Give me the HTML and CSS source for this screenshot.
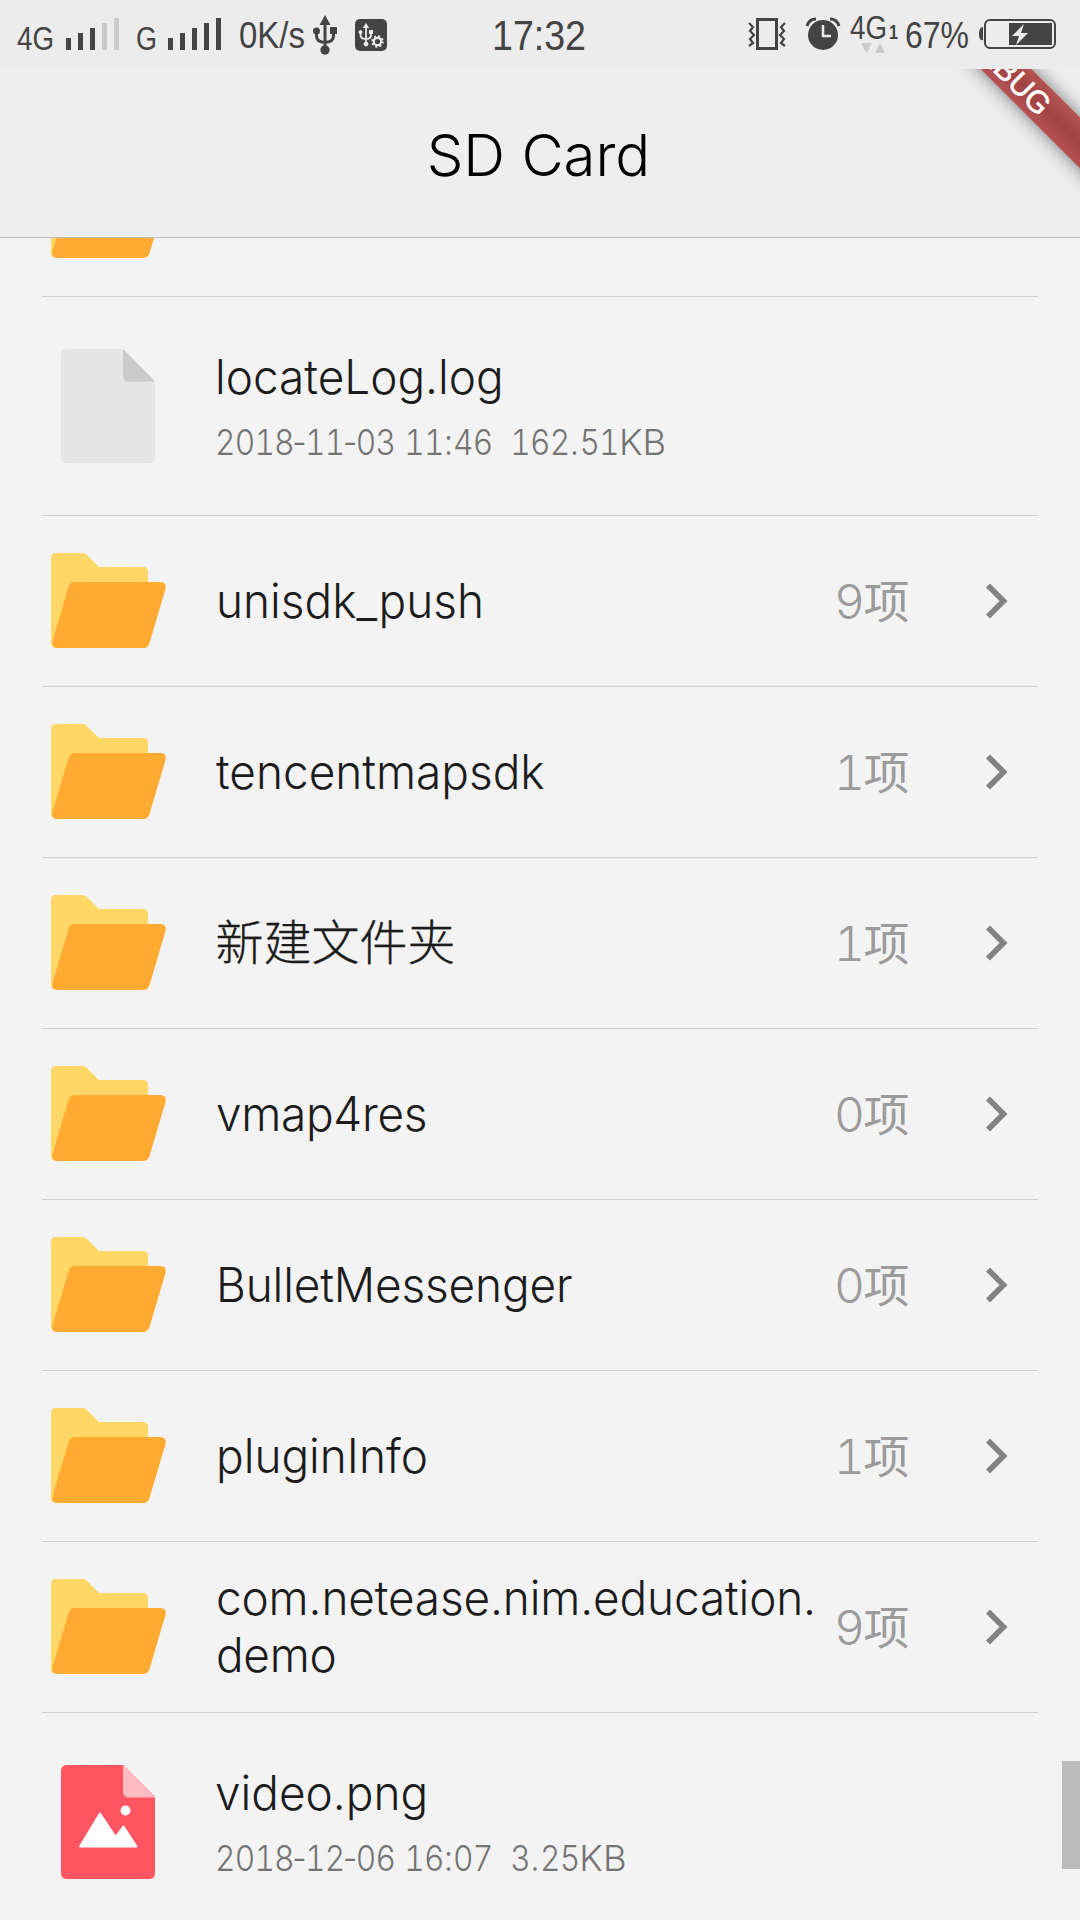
FILE: index.html
```html
<!DOCTYPE html>
<html lang="zh-CN">
<head>
<meta charset="utf-8">
<title>SD Card</title>
<link rel="stylesheet" href="styles.css">
</head>
<body>
<svg width="0" height="0" class="defs" aria-hidden="true">
  <symbol id="folder" viewBox="0 0 116 97">
    <path fill="#ffd766" d="M5 1H31Q34 1 36 3L48 15H92Q97 15 97 20V90Q97 96 91 96H6Q0 96 0 90V6Q0 1 5 1Z"/>
    <path fill="#ffab31" d="M24 30H109Q116 30 114.500 37L98.500 91Q97 96 92 96H7Q0 96 1.500 89L17.500 35Q19 30 24 30Z"/>
  </symbol>
  <symbol id="chevron" viewBox="0 0 24 38"><path d="M3 3.500L18.500 19L3 34.500" fill="none" stroke="#838383" stroke-width="5.700"/></symbol>
</svg>
<header class="status">
  <div class="status-left">
    <svg class="net" width="37" height="32"><text x="0" y="26" font-size="33" textLength="37" lengthAdjust="spacingAndGlyphs">4G</text></svg>
    <svg class="bars" width="54" height="32"><path d="M0 14h5v12h-5zM12 9h5v17h-5zM24 4h5v22h-5z"/><path class="dim" d="M36-1h5v27h-5zM48-6h5v32h-5z"/></svg>
    <svg class="net2" width="21" height="32"><text x="0" y="26" font-size="33" textLength="21" lengthAdjust="spacingAndGlyphs">G</text></svg>
    <svg class="bars" width="54" height="32"><path d="M0 14h5v12h-5zM12 9h5v17h-5zM24 4h5v22h-5zM36-1h5v27h-5zM48-6h5v32h-5z"/></svg>
    <svg class="speed" width="66" height="32"><text x="0" y="24" font-size="36" textLength="66" lengthAdjust="spacingAndGlyphs">0K/s</text></svg>
    <svg class="usb" width="24" height="40"><path d="M12 0L17.500 10H6.500ZM17 12h7v7h-7z"/><circle cx="3.500" cy="16" r="3.500"/><circle cx="12" cy="35" r="4.700"/><path d="M12 8V34M3.500 16V21Q3.500 27 12 27.500M20.500 16V21Q20.500 27 12 27.500" fill="none" stroke="#444" stroke-width="3"/></svg>
    <svg class="usbset" width="32" height="32"><rect width="32" height="32" rx="5"/><g fill="#ececec" stroke="#ececec"><path stroke="none" d="M11 4l3.200 5H7.800zM14 11h4v4h-4z"/><circle cx="5.500" cy="13" r="1.500"/><circle cx="11" cy="25" r="2"/><path d="M11 8V25M5.500 13V16Q5.500 20 11 20M16 14V16Q16 20 11 20" fill="none" stroke-width="1.800"/><circle cx="22.500" cy="22.500" r="3.700" fill="none" stroke-width="2.200"/><circle cx="22.500" cy="22.500" r="5.200" fill="none" stroke-width="2" stroke-dasharray="2 2.080"/></g></svg>
  </div>
  <svg class="time" width="94" height="40"><text x="0" y="34" font-size="42" textLength="94" lengthAdjust="spacingAndGlyphs">17:32</text></svg>
  <div class="status-right">
    <svg class="vibrate" width="38" height="32"><path d="M9.500 1.500h19v29h-19z" fill="none" stroke="#444" stroke-width="3"/><path d="M1 5l4 4-3 4 4 4-4 4 3 4-4 3M37 5l-4 4 3 4-4 4 4 4-3 4 4 3" fill="none" stroke="#444" stroke-width="2.200"/></svg>
    <svg class="alarm" width="34" height="32"><circle cx="17" cy="17" r="15"/><path d="M17 7v11h8" fill="none" stroke="#ececec" stroke-width="2.500"/><path d="M1 8Q3 1 10 1M24 1Q31 1 33 8" fill="none" stroke="#444" stroke-width="3"/></svg>
    <svg class="data" width="48" height="40"><text x="0" y="26" font-size="33" textLength="37" lengthAdjust="spacingAndGlyphs">4G</text><text x="39" y="26" font-size="20" textLength="9" lengthAdjust="spacingAndGlyphs" class="sim">1</text><path class="dim" d="M11 30h11l-5.500 10zM25 40h10l-5-10z"/></svg>
    <svg class="pct" width="64" height="32"><text x="0" y="26" font-size="36" textLength="64" lengthAdjust="spacingAndGlyphs">67%</text></svg>
    <svg class="battery" width="77" height="32"><path d="M4 9Q0 9 0 16T4 22z"/><rect x="6" y="2" width="70" height="28" rx="5" fill="none" stroke="#444" stroke-width="2"/><path d="M30 5h43v22H30z"/><path fill="#ececec" d="M45 6L33 18h7l-3 9 12-12h-7z"/></svg>
  </div>
</header>
<nav class="nav">
  <h1>SD Card</h1>
  <div class="debug-area"><div class="debug">DEBUG</div></div>
</nav>
<main class="list">
  <div class="row folder cut"><svg class="ico"><use href="#folder"/></svg></div>
  <div class="row file">
    <svg class="ico doc" viewBox="0 0 94 114"><path fill="#e5e5e5" d="M6 0H62L94 32V108Q94 114 88 114H6Q0 114 0 108V6Q0 0 6 0Z"/><path fill="#cacaca" d="M62 0L94 32.500H68Q62 32.500 62 27Z"/></svg>
    <div class="info"><div class="name">locateLog.log</div><div class="meta"><span class="date">2018<i>-</i>11<i>-</i>03</span><span class="hour">11<i class="colon">:</i>46</span><span>162<i class="dot">.</i>51<b>KB</b></span></div></div>
  </div>
  <div class="row folder"><svg class="ico"><use href="#folder"/></svg><div class="name">unisdk_push</div><div class="count">9<span>项</span></div><svg class="chev"><use href="#chevron"/></svg></div>
  <div class="row folder"><svg class="ico"><use href="#folder"/></svg><div class="name">tencentmapsdk</div><div class="count">1<span>项</span></div><svg class="chev"><use href="#chevron"/></svg></div>
  <div class="row folder"><svg class="ico"><use href="#folder"/></svg><div class="name han">新建文件夹</div><div class="count">1<span>项</span></div><svg class="chev"><use href="#chevron"/></svg></div>
  <div class="row folder"><svg class="ico"><use href="#folder"/></svg><div class="name tight">vmap4res</div><div class="count">0<span>项</span></div><svg class="chev"><use href="#chevron"/></svg></div>
  <div class="row folder"><svg class="ico"><use href="#folder"/></svg><div class="name snug">BulletMessenger</div><div class="count">0<span>项</span></div><svg class="chev"><use href="#chevron"/></svg></div>
  <div class="row folder"><svg class="ico"><use href="#folder"/></svg><div class="name">pluginInfo</div><div class="count">1<span>项</span></div><svg class="chev"><use href="#chevron"/></svg></div>
  <div class="row folder"><svg class="ico"><use href="#folder"/></svg><div class="name snug">com.netease.nim.education.<br><span class="tight">demo</span></div><div class="count">9<span>项</span></div><svg class="chev"><use href="#chevron"/></svg></div>
  <div class="row file">
    <svg class="ico doc" viewBox="0 0 94 114"><path fill="#ff5562" d="M6 0H62L94 32V108Q94 114 88 114H6Q0 114 0 108V6Q0 0 6 0Z"/><path fill="#ffbbc0" d="M62 0L94 32.500H68Q62 32.500 62 27Z"/><path fill="#fff" stroke="#fff" stroke-width="2" stroke-linejoin="round" d="M19 81.500L39 48.500L54.500 72L62.500 61.500L75.500 81.500Z"/><circle cx="64.500" cy="45.500" r="5" fill="#fff"/></svg>
    <div class="info"><div class="name">video.png</div><div class="meta"><span class="date">2018<i>-</i>12<i>-</i>06</span><span class="hour">16<i class="colon">:</i>07</span><span>3<i class="dot">.</i>25<b>KB</b></span></div></div>
  </div>
  <div class="scrollbar"></div>
</main>
</body>
</html>
```
FILE: styles.css
```css
* { box-sizing: border-box; }
body {
  margin: 0;
  width: 1080px;
  height: 1920px;
  overflow: hidden;
  background: #f3f3f3;
  color: #1c1c1c;
  font-family: Inter, "Noto Sans CJK SC", sans-serif;
  font-weight: 300;
  display: flex;
  flex-direction: column;
}
svg { display: block; flex: none; overflow: visible; }
.defs { position: absolute; }

.status {
  flex: none;
  height: 69px;
  background: #ececec;
  display: flex;
  padding: 0 24px 0 17px;
  fill: #444;
  font-family: "Liberation Sans", sans-serif;
  font-weight: 400;
}
.status-left, .status-right { display: flex; align-items: flex-start; flex: none; }
.status-left { width: 475px; padding-top: 24px; }
.status-right { width: 308px; padding-top: 18px; }
.dim { fill: #cacaca; }
.bars { margin-left: 12px; }
.net2 { margin-left: 16px; }
.net2 + .bars { margin-left: 11px; }
.speed { margin-left: 17px; }
.usb { margin: -9px 0 0 8px; }
.usbset { margin: -5px 0 0 18px; }
.time { margin-top: 16px; margin-right: auto; }
.alarm { margin-left: 20px; }
.data { margin: -5px 0 0 10px; }
.sim { font-weight: 700; }
.pct { margin: 4px 0 0 7px; }
.battery { margin: 0 0 0 10px; }

.nav {
  flex: none;
  position: relative;
  height: 169px;
  background: #eee;
  border-bottom: 1px solid #bcbcbc;
  display: flex;
  align-items: center;
  justify-content: center;
}
.nav h1 {
  margin: 4px 3px 0 0;
  color: #000;
  font-size: 58px;
  font-weight: 300;
  line-height: 70px;
  white-space: nowrap;
}
/* corner ribbon over the navigation bar */
.debug-area {
  position: absolute;
  top: 0;
  right: 0;
  width: 200px;
  height: 160px;
  overflow: hidden;
}
.debug {
  position: absolute;
  left: -72px;
  top: -16px;
  width: 400px;
  height: 36px;
  transform: rotate(45deg);
  background: linear-gradient(#b55353, #a34444 45%, #a34444 55%, #b55353);
  box-shadow: 0 0 18px rgba(0, 0, 0, .5);
  color: #fff;
  font: 400 30.6px/36px "Liberation Sans", sans-serif;
  -webkit-text-stroke: .6px #fff;
  text-align: center;
}

.list { position: relative; flex: 1; overflow: hidden; padding: 0 42px; }
.row {
  display: flex;
  align-items: center;
  height: 171px;
  border-bottom: 1px solid #d0d0d0;
  padding-left: 9px;
}
.row.cut { margin-top: -112px; }
.row.file { height: 219px; padding-left: 19px; align-items: flex-start; }
.ico { width: 116px; height: 97px; margin-bottom: 2px; }
.doc { width: 94px; height: 114px; margin-top: 52px; }
.info { margin: 51px 0 0 60px; }
.name {
  font-size: 48px;
  line-height: 57px;
  white-space: nowrap;
  transform: scaleX(.957);
  transform-origin: left;
}
.snug { letter-spacing: -.15px; }
.tight { letter-spacing: -.3px; }
.han { transform: none; -webkit-text-stroke: .3px #1c1c1c; }
.folder .name { width: 619px; margin: -2px 0 0 48.5px; }
.meta {
  display: flex;
  width: 600px;
  color: #747474;
  font-size: 36px;
  font-variant-numeric: tabular-nums;
  letter-spacing: -.9px;
  line-height: 44px;
  margin-top: 15px;
  white-space: nowrap;
  transform: scaleX(.88);
  transform-origin: left;
}
.date { width: 215px; }
.hour { width: 120.5px; }
.meta i {
  display: inline-flex;
  justify-content: center;
  width: 12.8px;
  font-style: normal;
  font-variant-numeric: normal;
  letter-spacing: 0;
}
.meta .colon { width: 10.8px; }
.meta .dot { width: 11.4px; }
.meta b {
  display: inline-block;
  font-weight: 300;
  letter-spacing: 0;
  transform: scaleX(1.15);
  transform-origin: left;
}
.count {
  display: flex;
  align-items: center;
  width: 151px;
  margin-left: -.5px;
  color: #9b9b9b;
  font-size: 48px;
  font-variant-numeric: tabular-nums;
  letter-spacing: -1.5px;
  line-height: 57px;
}
.count span { font-size: 46px; font-weight: 400; }
.chev { width: 24px; height: 38px; }
.scrollbar { position: absolute; right: 0; top: 1523px; width: 18px; height: 108px; background: #bbb; }
```
